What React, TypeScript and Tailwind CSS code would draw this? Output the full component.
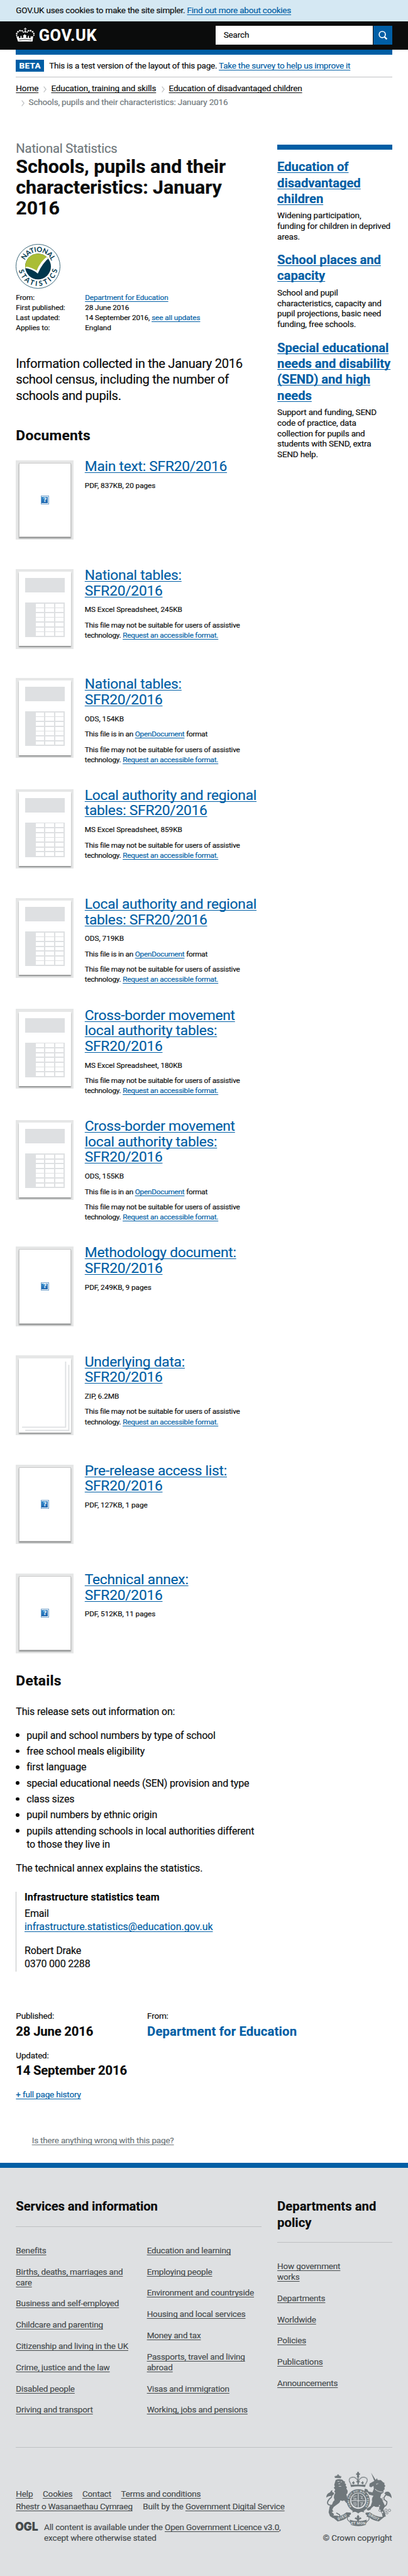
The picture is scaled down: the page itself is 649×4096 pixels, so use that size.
import type { ReactNode } from "react";

type Doc = {
  title: string[];
  meta: string;
  kind: "pdf" | "sheet" | "zip";
  open?: boolean;
  help?: boolean;
  size: string;
};

const DOCS: Doc[] = [
  { title: ["Main text: SFR20/2016"], meta: "PDF, 837KB, 20 pages", kind: "pdf", size: "h-[205px]" },
  { title: ["National tables:", "SFR20/2016"], meta: "MS Excel Spreadsheet, 245KB", kind: "sheet", help: true, size: "h-[205px]" },
  { title: ["National tables:", "SFR20/2016"], meta: "ODS, 154KB", kind: "sheet", open: true, help: true, size: "h-[209px]" },
  { title: ["Local authority and regional", "tables: SFR20/2016"], meta: "MS Excel Spreadsheet, 859KB", kind: "sheet", help: true, size: "h-[205px]" },
  { title: ["Local authority and regional", "tables: SFR20/2016"], meta: "ODS, 719KB", kind: "sheet", open: true, help: true, size: "h-[209px]" },
  { title: ["Cross-border movement", "local authority tables:", "SFR20/2016"], meta: "MS Excel Spreadsheet, 180KB", kind: "sheet", help: true, size: "h-[209px]" },
  { title: ["Cross-border movement", "local authority tables:", "SFR20/2016"], meta: "ODS, 155KB", kind: "sheet", open: true, help: true, size: "h-[238px]" },
  { title: ["Methodology document:", "SFR20/2016"], meta: "PDF, 249KB, 9 pages", kind: "pdf", size: "h-[205px]" },
  { title: ["Underlying data:", "SFR20/2016"], meta: "ZIP, 6.2MB", kind: "zip", help: true, size: "h-[205px]" },
  { title: ["Pre-release access list:", "SFR20/2016"], meta: "PDF, 127KB, 1 page", kind: "pdf", size: "h-[205px]" },
  { title: ["Technical annex:", "SFR20/2016"], meta: "PDF, 512KB, 11 pages", kind: "pdf", size: "h-[150px]" },
];

const TOPICS = [
  {
    title: ["Education of", "disadvantaged", "children"],
    text: ["Widening participation,", "funding for children in deprived", "areas."],
  },
  {
    title: ["School places and", "capacity"],
    text: ["School and pupil", "characteristics, capacity and", "pupil projections, basic need", "funding, free schools."],
  },
  {
    title: ["Special educational", "needs and disability", "(SEND) and high", "needs"],
    text: ["Support and funding, SEND", "code of practice, data", "collection for pupils and", "students with SEND, extra", "SEND help."],
  },
];

const SERVICES_A = [
  ["Benefits"], ["Births, deaths, marriages and", "care"], ["Business and self-employed"], ["Childcare and parenting"],
  ["Citizenship and living in the UK"], ["Crime, justice and the law"], ["Disabled people"], ["Driving and transport"],
];
const SERVICES_B = [
  ["Education and learning"], ["Employing people"], ["Environment and countryside"], ["Housing and local services"],
  ["Money and tax"], ["Passports, travel and living", "abroad"], ["Visas and immigration"], ["Working, jobs and pensions"],
];
const POLICY = [["How government", "works"], ["Departments"], ["Worldwide"], ["Policies"], ["Publications"], ["Announcements"]];

const DETAILS = [
  ["pupil and school numbers by type of school"], ["free school meals eligibility"], ["first language"],
  ["special educational needs (SEN) provision and type"], ["class sizes"], ["pupil numbers by ethnic origin"],
  ["pupils attending schools in local authorities different", "to those they live in"],
];

const UNDERLINE = "underline decoration-1 underline-offset-2 [text-decoration-skip-ink:none]";

function Link({ children, className = "text-[#005ea5]" }: { children: ReactNode; className?: string }) {
  return <a className={`${UNDERLINE} ${className}`}>{children}</a>;
}

function Lines({ lines }: { lines: string[] }) {
  return (
    <>
      {lines.map((line, i) => (
        <span key={line}>
          {i > 0 && <br />}
          {line}
        </span>
      ))}
    </>
  );
}

function Crown() {
  const dots = [
    [1.8, 14.3, 1.3], [1.9, 10.9, 1.4], [4.2, 7.7, 1.6], [8, 5.700, 1.7], [11.900, 5.8, 1.5], [14.5, 8.4, 1.3],
    [34.2, 14.3, 1.3], [34.1, 10.9, 1.4], [31.8, 7.7, 1.6], [28, 5.700, 1.7], [24.100, 5.8, 1.5], [21.5, 8.4, 1.3],
  ];
  return (
    <svg viewBox="0 0 36 26" className="h-[26px] w-9" fill="#fff">
      {dots.map(([x, y, r]) => <circle key={`${x}-${y}`} cx={x} cy={y} r={r} />)}
      <path d="M17.2 0h1.6l-.4 1.9 1.9-.4v1.7l-1.9-.4.5 3.4 1 1.5-1.9 2-1.9-2 1-1.5.5-3.4-1.9.4V1.500l1.9.4z" />
      <path d="M4.300 26 1 15.700l3.100 1.100 1.400-1.100 1 4.300 2.700-1-.3-2.200 1.100-2.300 1.200 2.200-.2 2.400 2.900-.1.900-1.800-1.200-1.500.9-1.400h1.200l.2-1.500h2.200l.2 1.500h1.200l.9 1.400-1.200 1.500.9 1.800 2.900.1-.2-2.400 1.200-2.200 1.100 2.300-.3 2.200 2.700 1 1-4.300 1.400 1.100 3.100-1.100L31.700 26H4.300z" />
      <path d="M6.500 23.200q11.500-2.600 23 0" stroke="#0b0c0c" strokeWidth="1" fill="none" />
    </svg>
  );
}

function StatisticsBadge() {
  return (
    <svg viewBox="0 0 84 84" className="size-[84px]">
      <defs>
        <clipPath id="disc"><circle cx="42" cy="42.300" r="24.300" /></clipPath>
        <path id="arcTop" d="M14.800 42a27.200 27.200 0 0 1 54.400 0" />
        <path id="arcBottom" d="M5 42a37 37 0 0 0 74 0" />
      </defs>
      <circle cx="42" cy="42" r="41.500" fill="#fff" stroke="#003a50" strokeWidth=".9" />
      <g clipPath="url(#disc)">
        <rect width="84" height="84" fill="#00374d" />
        <path d="M0 0h66v24Q50 32 41 52L22 45.500H0z" fill="#aabd35" />
        <path d="M20 42.500Q30 44 39.500 50 46 33 60 23l5 1Q50 36 41.500 55.500 31 47 18 45z" fill="#fff" />
      </g>
      <g fill="#00374d" fontFamily="Lato, 'Open Sans', sans-serif" fontWeight="700" fontSize="13">
        <text textLength="63" lengthAdjust="spacing"><textPath href="#arcTop" startOffset="11.500" textLength="63">NATIONAL</textPath></text>
        <text textLength="102" lengthAdjust="spacing"><textPath href="#arcBottom" startOffset="7.500" textLength="102">STATISTICS</textPath></text>
      </g>
    </svg>
  );
}

function Crest() {
  return (
    <svg viewBox="38 34 377 312" className="h-[103px] w-[125px]" fill="#6f777b">
      {/* lion */}
      <path d="M90 70l-2-12 6 4 3-7 4 5 6-8 5 8 5-5 3 7 7-3-3 13z" />
      <circle cx="108" cy="55" r="5" />
      <path d="M94 82q16-8 38-2l8 8 8 3-2 8 8 8-3 7 8 10-4 6 8 14-2 14-6 6q6 10 4 24l16 14-4 14-16-4-12-14-10 4-12-4q-2 14-14 20l-24 18-8 14 6 12-10 2 14 12-4 8 26 2q6 10-6 12H78l-16-10-8-22 6-34 14-12q4-16 14-24l-4-14q-2-14 8-26l-6-10 6-8-8-12 6-8-4-8z" />
      <path d="M82 226q-36 4-34-18 4-14 20-26 8-8 0-20M98 270l18 10 4 14-18-2" fill="none" stroke="#6f777b" strokeWidth="6" />
      <path d="M40 182q2-24 22-30 6-12 14-12l-2 10 12 6q-2 14-16 16-16 0-30 10z" />
      <path d="M104 90h12M122 92h8M110 104l10-2M112 118h14" stroke="#dee0e2" strokeWidth="3" />
      {/* unicorn */}
      <path d="M296 40l32 50-10 6zM320 84l10-12 4 10 18 0 14 14 6 2 0 10 6 8-6 8 2 10-6 6-2 14-12 8-6 20q12 6 14 18l14 30-10 20 10 18 4 22-18 4-4-24-14-16q-4-10 0-22-16 8-32-2l-14 12-6 10-14 4-8-10 24-16 8-24q-4-20 8-34l-24-6-10-14-18-4 2-16 14 2 8 14 22 4 8-20-2-16-14 8-10-6 2-16z" />
      <path d="M368 236q22-10 18-32-22-10-14-26 6-12 20-18M270 156l-4 18 16 18" fill="none" stroke="#6f777b" strokeWidth="6" />
      <path d="M372 158q8-14 26-8 14 10 16 36-12-14-26-14-8-4-16-14z" />
      <path d="M320 134q16 16 42 16M326 106l10-4" fill="none" stroke="#dee0e2" strokeWidth="5" strokeDasharray="5 3" />
      <g fill="#dee0e2" stroke="#6f777b" strokeWidth="3">
        <circle cx="364" cy="190" r="6" /><circle cx="344" cy="228" r="5" /><circle cx="346" cy="255" r="6" /><circle cx="361" cy="266" r="6" />
        <circle cx="381" cy="254" r="7" /><circle cx="387" cy="270" r="6" /><circle cx="401" cy="255" r="7" />
      </g>
      {/* crown */}
      <path d="M182 122l-4-14h88l-4 14q-40-8-80 0z" />
      <path d="M182 106q-18-26-4-36 20-10 34 4 10 10 10 30M264 106q18-26 4-36-20-10-34 4-10 10-10 30" fill="none" stroke="#6f777b" strokeWidth="6" strokeDasharray="5 2" />
      <path d="M222 66v42M196 90v16M248 90v16M188 98h14M240 98h14M212 92h20" stroke="#6f777b" strokeWidth="6" />
      <path d="M217 36h10v8h6v9h-6l2 14h-14l2-14h-6v-9h6z" />
      {/* garter and shield */}
      <circle cx="223" cy="200" r="56" fill="#dee0e2" stroke="#6f777b" strokeWidth="20" />
      <circle cx="223" cy="198" r="40" />
      <path d="M223 160v78M184 200h78" stroke="#dee0e2" strokeWidth="4" />
      <path d="M194 176l20-4M192 184l22 4M196 194l18-2M234 172l14 6-10 8 14 4M194 212h20M194 220h22M200 228h14M234 212l16-2-12 12 12-4M236 228h10" stroke="#dee0e2" strokeWidth="3" fill="none" />
      <path id="garter" d="M186 235a51 51 0 1 1 74 0" fill="none" />
      <text fill="#dee0e2" fontFamily="Roboto, sans-serif" fontSize="14" fontWeight="700"><textPath href="#garter" startOffset="2" textLength="232">HONI SOIT QUI MAL Y PENSE</textPath></text>
      <path d="M196 252l-8 14 24-4M250 252l8 14-24-4M208 262h30l-15 10z" />
      {/* ribbon */}
      <path d="M74 292q46 4 82-26l24 2q6 10-8 16l4 6-18 6q-10 14-52 22zM372 292q-46 4-82-26l-24 2q-6 10 8 16l-4 6 18 6q10 14 52 22z" />
      <path d="M174 308q48 16 98 0l-6 30q-42 14-84 0z" />
      <path d="M164 294q-8 8 2 18l14 14M282 294q8 8-2 18l-14 14" fill="none" stroke="#6f777b" strokeWidth="4" />
      <path d="M222 280l8 12-4 8 10-6 6 8-14 6v8h-12v-8l-14-6 6-8 10 6-4-8z" />
      <g fill="#dee0e2" fontFamily="Roboto, sans-serif" fontWeight="700" fontSize="21">
        <text x="182" y="336" textLength="82">ET MON</text>
        <text x="110" y="312" transform="rotate(-25 110 312)" textLength="54">DIEU</text>
        <text x="279" y="283" transform="rotate(28 279 283)" textLength="66">DROIT</text>
      </g>
    </svg>
  );
}

function Sheet() {
  return (
    <div className="flex h-full flex-col px-3 pt-3">
      <div className="h-[27px] bg-[#dee0e2]" />
      <div className="mt-[19px] grid h-[65px] grid-cols-3 gap-x-[2px] gap-y-[2px] bg-[#dee0e2] pt-[2px] pr-[2px] pb-[2px] pl-5">
        {Array.from({ length: 21 }, (_, i) => <div key={i} className="bg-white" />)}
      </div>
    </div>
  );
}

function Archive() {
  return (
    <svg viewBox="0 0 99 140" className="h-full w-full" fill="none" stroke="#dee0e2" strokeWidth="2.200">
      <path d="M88 6v123.500H6M94 12v123.500H12" />
    </svg>
  );
}

function MissingImage() {
  return (
    <div className="flex h-full items-center justify-center border border-[#c8c8c8]">
      <div className="size-4 border border-[#6f9fca] bg-white p-px">
        <div className="flex h-full items-center justify-center bg-linear-to-b from-[#3b8fce] to-[#1b63ad] font-['Liberation_Serif'] text-[12px] leading-none font-bold text-white">?</div>
      </div>
    </div>
  );
}

function Attachment({ doc }: { doc: Doc }) {
  return (
    <section className={`flex gap-[20.500px] ${doc.size}`}>
      <div className="h-[150px] w-[109px] shrink-0 bg-[#e6e7e7] p-[5px]">
        <div className="h-full bg-white shadow-[0_2px_2px_rgba(11,12,12,0.4)]">
          {doc.kind === "pdf" ? <MissingImage /> : doc.kind === "zip" ? <Archive /> : <Sheet />}
        </div>
      </div>
      <div className="text-[14px] leading-[19px] tracking-[-0.0215em] whitespace-nowrap">
        <h3 className="-mt-[2px] text-[27px] leading-[29px] tracking-[-0.012em]">
          <Link><Lines lines={doc.title} /></Link>
        </h3>
        <p className="mt-[11px] tracking-[-0.006em]">{doc.meta}</p>
        {doc.open && <p className="mt-[10px]">This file is in an <Link>OpenDocument</Link> format</p>}
        {doc.help && (
          <p className="mt-[10px]">
            This file may not be suitable for users of assistive<br />
            technology. <Link>Request an accessible format.</Link>
          </p>
        )}
      </div>
    </section>
  );
}

function LinkList({ items }: { items: string[][] }) {
  return (
    <ul className="flex flex-col gap-5">
      {items.map((lines) => <li key={lines[0]}><Link className=""><Lines lines={lines} /></Link></li>)}
    </ul>
  );
}

function Chevron({ className }: { className: string }) {
  return (
    <svg viewBox="0 0 6 12" className={`h-3 w-[6px] ${className}`} fill="none" stroke="#bfc1c3" strokeWidth="1.500">
      <path d="M.7.7 5 6 .7 11.300" />
    </svg>
  );
}

export default function App() {
  return (
    <div className="h-[4847px] w-[768px] overflow-hidden bg-white font-['Roboto',sans-serif] text-[16px] leading-5 tracking-[-0.014em] whitespace-nowrap text-[#0b0c0c] [zoom:0.84505] [-webkit-text-stroke-width:0.2px]">
      <div className="h-10 bg-[#d5e8f3] px-[30px] pt-[9px] tracking-[-0.0157em]">
        GOV.UK uses cookies to make the site simpler. <Link>Find out more about cookies</Link>
      </div>
      <header className="flex h-[53px] items-start justify-between bg-[#0b0c0c] px-[30px]">
        <div className="flex items-start pt-3">
          <Crown />
          <span className="ml-[7px] text-[30px] leading-[29px] font-bold tracking-[0.027em] text-white">GOV.UK</span>
        </div>
        <div className="mt-2 flex h-9 gap-px">
          <div className="flex w-[296px] items-center bg-white pl-[15px]">Search</div>
          <div className="flex w-[35px] items-center justify-center bg-[#005ea5]">
            <svg viewBox="0 0 17 17" className="size-[17px]" fill="none" stroke="#fff" strokeWidth="2">
              <circle cx="7.200" cy="7" r="5.800" />
              <path d="m11 11 4.800 4.800" strokeWidth="2.800" />
            </svg>
          </div>
        </div>
      </header>

      <main className="h-[3977px] px-[30px]">
        <div className="h-[10px] bg-[#005ea5]" />
        <div className="flex h-[43px] items-start border-b border-[#bfc1c3] pt-[10px]">
          <span className="flex h-[22px] w-[53px] items-center justify-center bg-[#005ea5] font-bold tracking-[0.026em] text-white">BETA</span>
          <span className="ml-[9.500px] pt-[1px] tracking-[-0.0179em]">
            This is a test version of the layout of this page. <Link>Take the survey to help us improve it</Link>
          </span>
        </div>
        <nav className="h-[118.800px] pt-[7.500px] leading-[26px]">
          <div className="flex items-center">
            <Link className="tracking-[-0.010em]">Home</Link>
            <Chevron className="mx-[9px] mt-[3px]" />
            <Link className="tracking-[-0.0101em]">Education, training and skills</Link>
            <Chevron className="mr-2 ml-[10px] mt-[3px]" />
            <Link className="tracking-[-0.0136em]">Education of disadvantaged children</Link>
          </div>
          <div className="flex items-center text-[#6f777b]">
            <Chevron className="mr-2 ml-[10px] mt-[3px]" />
            <span>Schools, pupils and their characteristics: January 2016</span>
          </div>
        </nav>

        <div className="flex gap-[30px]">
          <div className="w-[462px]">
            <p className="text-[24px] leading-[30px] tracking-[-0.0099em] text-[#6f777b]">National Statistics</p>
            <h1 className="text-[36px] leading-[39px] font-bold tracking-[-0.003em]">
              <Lines lines={["Schools, pupils and their", "characteristics: January", "2016"]} />
            </h1>
            <div className="mt-[47px]"><StatisticsBadge /></div>
            <dl className="mt-[7px] grid grid-cols-[130px_1fr] text-[14px] leading-[19px] tracking-[-0.0109em]">
              <dt>From:</dt><dd><Link>Department for Education</Link></dd>
              <dt>First published:</dt><dd>28 June 2016</dd>
              <dt>Last updated:</dt><dd>14 September 2016, <Link>see all updates</Link></dd>
              <dt>Applies to:</dt><dd>England</dd>
            </dl>
            <p className="mt-11 text-[24px] leading-[30px] tracking-[-0.0174em]">
              <Lines lines={["Information collected in the January 2016", "school census, including the number of", "schools and pupils."]} />
            </p>
            <h2 className="mt-[45px] mb-[31px] text-[27px] leading-[30px] font-bold tracking-[0.010em]">Documents</h2>
            {DOCS.map((doc, i) => <Attachment key={i} doc={doc} />)}
            <h2 className="mt-[37.500px] text-[27px] leading-[30px] font-bold tracking-[0.010em]">Details</h2>

            <div className="mt-[29.500px] text-[19px] leading-[25px] tracking-[-0.0130em]">
              <p>This release sets out information on:</p>
              <ul className="mt-5 flex flex-col gap-[5px]">
                {DETAILS.map((lines) => (
                  <li key={lines[0]} className="flex">
                    <span className="mt-[9px] mr-[13px] size-[7px] shrink-0 rounded-full bg-[#0b0c0c]" />
                    <span><Lines lines={lines} /></span>
                  </li>
                ))}
              </ul>
              <p className="mt-5">The technical annex explains the statistics.</p>
              <address className="mt-8 h-[150px] border-l border-[#bfc1c3] pl-[15px] not-italic">
                <p className="mb-[7px] leading-[21px] font-bold tracking-[0.0091em]">Infrastructure statistics team</p>
                <p>Email<br /><Link className="tracking-[-0.0031em] text-[#005ea5]">infrastructure.statistics@education.gov.uk</Link></p>
                <p className="mt-5">Robert Drake<br />0370 000 2288</p>
              </address>
            </div>
          </div>

          <aside className="w-[216px] pt-[7.200px]">
            <div className="h-[10px] bg-[#005ea5]" />
            {TOPICS.map((topic, i) => (
              <div key={topic.title[0]} className={i === 0 ? "pt-[17.800px]" : "pt-[19.300px]"}>
                <h2 className="text-[24px] leading-[30px] font-bold tracking-[-0.003em]"><Link><Lines lines={topic.title} /></Link></h2>
                <p className="mt-[5.700px]"><Lines lines={topic.text} /></p>
              </div>
            ))}
          </aside>
        </div>

        <div className="mt-[74px] flex">
          <div className="w-[247px]">
            <p>Published:</p>
            <p className="mt-1 text-[24px] leading-[30px] font-bold tracking-[-0.008em]">28 June 2016</p>
            <p className="mt-5">Updated:</p>
            <p className="mt-1 text-[24px] leading-[30px] font-bold tracking-[-0.0096em]">14 September 2016</p>
            <p className="mt-5"><Link>+ full page history</Link></p>
          </div>
          <div>
            <p>From:</p>
            <p className="mt-1 text-[24px] leading-[30px] font-bold tracking-[0.0076em] text-[#005ea5]">Department for Education</p>
          </div>
        </div>
        <p className="mt-[66px] pl-[30px] tracking-[-0.0149em]"><Link className="text-[#6f777b]">Is there anything wrong with this page?</Link></p>
      </main>

      <footer className="h-[777px] border-t-[10px] border-[#005ea5] bg-[#dee0e2] px-[30px] pt-[58px] tracking-[-0.0125em] text-[#454a4c]">
        <div className="flex h-[468px] gap-[30px] border-b border-[#bfc1c3]">
          <div className="w-[462px]">
            <h2 className="h-[53px] border-b border-[#bfc1c3] text-[24px] leading-[30px] font-bold tracking-[-0.0063em] text-[#0b0c0c]">Services and information</h2>
            <div className="mt-[34px] grid grid-cols-[246.500px_1fr]">
              <LinkList items={SERVICES_A} />
              <LinkList items={SERVICES_B} />
            </div>
          </div>
          <div className="w-[216px]">
            <h2 className="mb-[34px] h-[83px] border-b border-[#bfc1c3] text-[24px] leading-[30px] font-bold tracking-[0.001em] text-[#0b0c0c]">
              <Lines lines={["Departments and", "policy"]} />
            </h2>
            <LinkList items={POLICY} />
          </div>
        </div>
        <div className="flex justify-between">
          <div className="pt-[74.500px]">
            <div className="flex gap-[18.500px] leading-6">
              <Link className="">Help</Link><Link className="">Cookies</Link><Link className="">Contact</Link><Link className="">Terms and conditions</Link>
            </div>
            <div className="flex gap-[19.500px] leading-6">
              <Link className="tracking-[-0.0181em]">Rhestr o Wasanaethau Cymraeg</Link>
              <span>Built by the <Link className="">Government Digital Service</Link></span>
            </div>
            <div className="mt-[17.700px] flex gap-3">
              <svg viewBox="0 0 41 17" className="h-[17px] w-[41px] overflow-visible" fill="#454a4c">
                <text x="-1" y="16.500" fontFamily="Inter, sans-serif" fontWeight="900" fontSize="22" textLength="43" lengthAdjust="spacingAndGlyphs">OGL</text>
              </svg>
              <p>All content is available under the <Link className="">Open Government Licence v3.0</Link>,<br />except where otherwise stated</p>
            </div>
          </div>
          <div className="flex flex-col items-end pt-[45.500px]">
            <Crest />
            <p className="mt-[11px] tracking-[-0.008em]">© Crown copyright</p>
          </div>
        </div>
      </footer>
    </div>
  );
}
